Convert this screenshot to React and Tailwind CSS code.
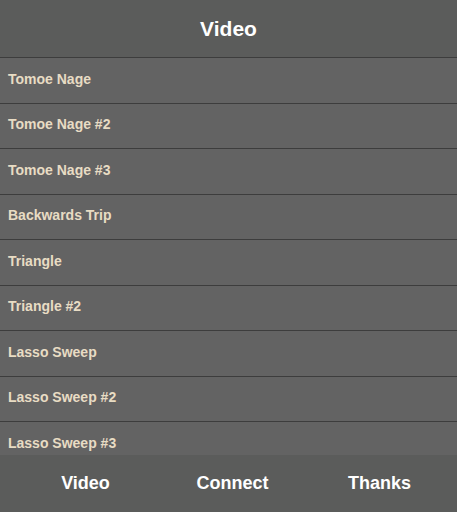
export default function App() {
  const items = [
    "Tomoe Nage",
    "Tomoe Nage #2",
    "Tomoe Nage #3",
    "Backwards Trip",
    "Triangle",
    "Triangle #2",
    "Lasso Sweep",
    "Lasso Sweep #2",
    "Lasso Sweep #3",
  ];
  return (
    <div className="w-[457px] h-[512px] flex flex-col bg-[#636363] overflow-hidden font-['Liberation_Sans',Arial,sans-serif] font-bold">
      <div className="h-[57px] shrink-0 bg-[#5b5c5b] flex items-center justify-center text-white text-[21px]">
        Video
      </div>
      <div className="flex-1 overflow-hidden">
        {items.map((t) => (
          <div
            key={t}
            className="h-[45.5px] box-border border-t-[1.5px] border-[#3d3d3d] bg-[#636363] flex items-center pl-[8px] pb-[2px] text-[14px] text-[#e8dcc4]"
          >
            {t}
          </div>
        ))}
      </div>
      <div className="h-[57px] shrink-0 bg-[#5b5c5b] grid grid-cols-3 pl-[12px] pr-[4px] items-center text-white text-[18px]">
        <div className="text-center">Video</div>
        <div className="text-center">Connect</div>
        <div className="text-center">Thanks</div>
      </div>
    </div>
  );
}
